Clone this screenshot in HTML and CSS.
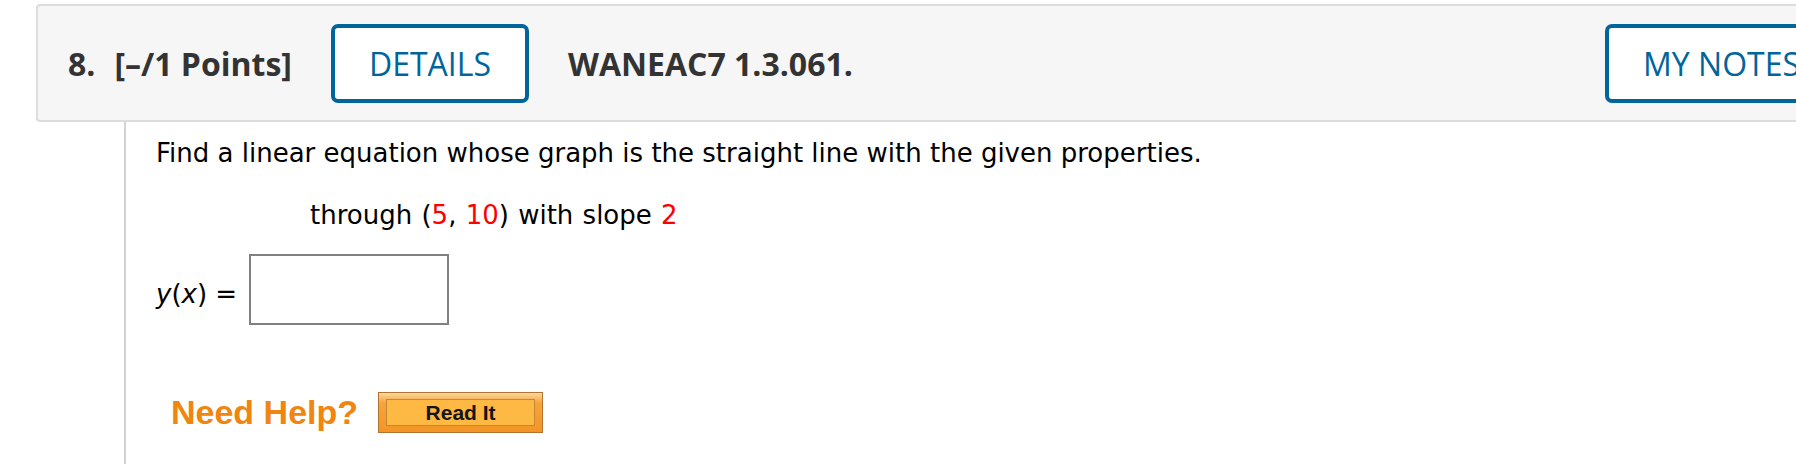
FILE: index.html
```html
<!DOCTYPE html>
<html lang="en">
<head>
<meta charset="utf-8">
<title>Question 8</title>
<link rel="stylesheet" href="styles.css">
</head>
<body>
<div class="qhead">
  <span class="qnum">8.</span>
  <span class="qpoints">[–/1 Points]</span>
  <button class="hbtn details">DETAILS</button>
  <span class="qcode">WANEAC7 1.3.061.</span>
  <button class="hbtn notes">MY NOTES</button>
</div>
<div class="qbody">
  <p class="prompt">Find a linear equation whose graph is the straight line with the given properties.</p>
  <p class="given">through (<span class="red">5</span>, <span class="red">10</span>) with slope <span class="red">2</span></p>
  <div class="answer-row">
    <span class="label"><i>y</i>(<i>x</i>) =</span>
    <input class="answer" type="text">
  </div>
  <div class="help-row">
    <span class="need-help">Need Help?</span>
    <span class="read-it"><span class="read-it-inner">Read It</span></span>
  </div>
</div>
</body>
</html>
```
FILE: styles.css
```css
html, body {
  margin: 0;
  padding: 0;
  background: #ffffff;
  overflow: hidden;
}

.qhead {
  display: flex;
  align-items: center;
  box-sizing: border-box;
  width: 1834px;
  height: 118px;
  margin: 4px 0 0 36px;
  padding: 0 30px;
  background: #f6f6f6;
  border: 2px solid #dddddd;
  border-radius: 4px;
  font-family: "Open Sans", "DejaVu Sans", sans-serif;
  font-size: 32px;
  font-weight: 700;
  color: #333333;
}

.qnum {
  margin-right: 19px;
}

.qpoints {
  margin-right: 39px;
}

.hbtn {
  box-sizing: border-box;
  height: 79px;
  padding: 0 34px;
  background: #ffffff;
  border: 4px solid #00659b;
  border-radius: 7px;
  font-family: "Open Sans", "DejaVu Sans", sans-serif;
  font-size: 32px;
  font-weight: 400;
  color: #00659b;
}

.qcode {
  margin-left: 39px;
}

.notes {
  margin-left: auto;
}

.qbody {
  box-sizing: border-box;
  height: 342px;
  margin-left: 124px;
  padding: 16px 0 0 30px;
  border-left: 2px solid #d3d3d3;
  font-family: "DejaVu Sans", Verdana, sans-serif;
  font-size: 26px;
  color: #000000;
}

.prompt {
  margin: 0;
}

.given {
  margin: 32px 0 0 154px;
  word-spacing: 1px;
}

.red {
  color: #ff0000;
}

.answer-row {
  display: flex;
  align-items: center;
  margin-top: 24px;
}

.label {
  margin-top: 8px;
  margin-right: 12px;
}

.answer {
  box-sizing: border-box;
  width: 200px;
  height: 71px;
  margin: 0;
  border: 2px solid #808080;
  background: #ffffff;
}

.help-row {
  display: flex;
  align-items: center;
  margin-top: 67px;
  padding-left: 15px;
}

.need-help {
  font-family: "Liberation Sans", Arial, sans-serif;
  font-weight: 700;
  font-size: 34px;
  color: #f0850f;
  margin-right: 20px;
}

.read-it {
  box-sizing: border-box;
  display: flex;
  width: 165px;
  height: 41px;
  padding: 6px 7px;
  background: linear-gradient(#fbd7a0 0%, #f7a43a 25%, #f39526 100%);
  border: 1px solid #b27330;
}

.read-it-inner {
  flex: 1;
  display: flex;
  align-items: center;
  justify-content: center;
  background: #fdb943;
  border: 1px solid #c58637;
  font-family: "Liberation Sans", Arial, sans-serif;
  font-weight: 700;
  font-size: 21px;
  color: #151515;
}
```
